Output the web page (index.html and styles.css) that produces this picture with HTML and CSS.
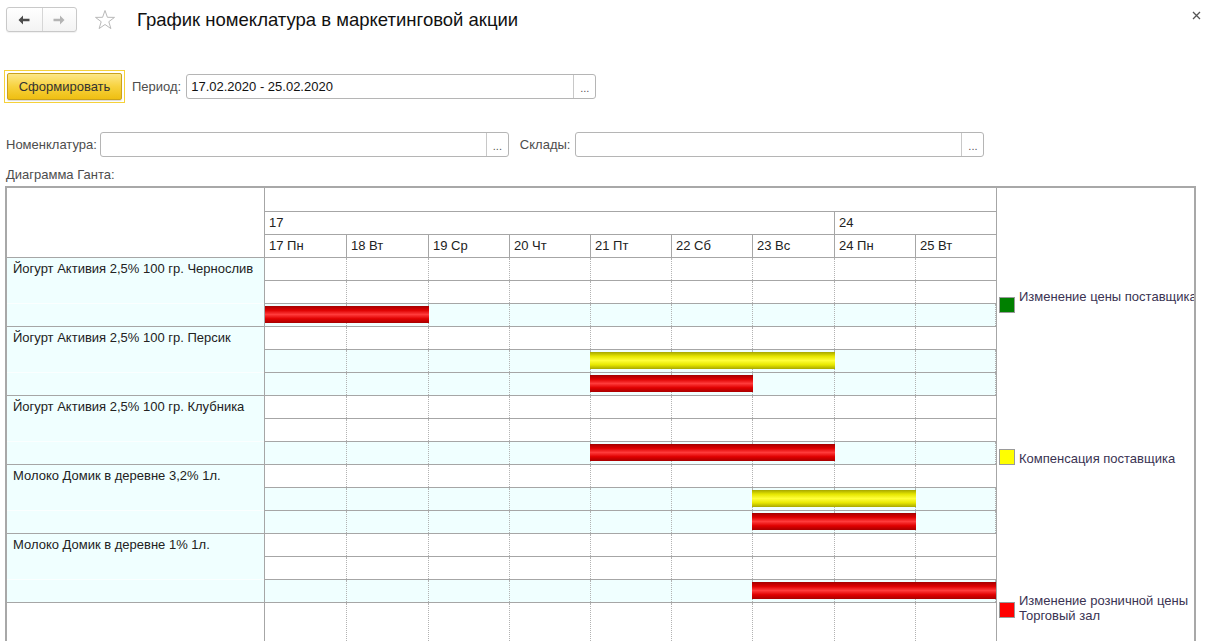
FILE: index.html
```html
<!DOCTYPE html>
<html lang="ru">
<head>
    <meta charset="UTF-8">
    <meta name="viewport" content="width=device-width, initial-scale=1.0">
    <title>График номеклатура в маркетинговой акции</title>
    <link rel="stylesheet" href="styles.css">
</head>
<body>
    <div class="window">
        <div class="titlebar">
            <div class="nav">
                <button class="nav-btn">
                    <svg width="12" height="10" viewBox="-6 -5 12 10"><polygon points="-5.5,0 -1,-4.5 -1,-1.2 5.5,-1.2 5.5,1.2 -1,1.2 -1,4.5" fill="#4a4a4a"/></svg>
                </button>
                <button class="nav-btn disabled">
                    <svg width="12" height="10" viewBox="-6 -5 12 10"><polygon points="5.5,0 1,-4.5 1,-1.2 -5.5,-1.2 -5.5,1.2 1,1.2 1,4.5" fill="#b4b4b4"/></svg>
                </button>
            </div>
            <span class="fav">
                <svg width="22" height="22" viewBox="0 0 22 22"><polygon points="11,1.5 13.4,8.3 20.5,8.4 14.8,12.7 16.9,19.6 11,15.5 5.1,19.6 7.2,12.7 1.5,8.4 8.6,8.3" fill="none" stroke="#b9b9b9" stroke-width="1" stroke-linejoin="round"/></svg>
            </span>
            <h1 class="title">График номеклатура в маркетинговой акции</h1>
            <span class="close">
                <svg width="9" height="9" viewBox="0 0 9 9"><path d="M1 1L8 8M8 1L1 8" stroke="#555" stroke-width="1.3"/></svg>
            </span>
        </div>

        <div class="toolbar">
            <div class="btn-focus"><button class="btn-primary">Сформировать</button></div>
            <span class="field-label period-label">Период:</span>
            <div class="input input-period">
                <span class="input-text">17.02.2020 - 25.02.2020</span>
                <span class="input-choice">...</span>
            </div>
        </div>

        <div class="filters">
            <span class="field-label nomen-label">Номенклатура:</span>
            <div class="input input-filter">
                <span class="input-text"></span>
                <span class="input-choice">...</span>
            </div>
            <span class="field-label stores-label">Склады:</span>
            <div class="input input-filter">
                <span class="input-text"></span>
                <span class="input-choice">...</span>
            </div>
        </div>

        <div class="gantt-caption">Диаграмма Ганта:</div>

        <div class="gantt">
            <div class="gantt-left">
                <div class="left-head"></div>
                <div id="left-rows"></div>
            </div>

            <div class="gantt-chart">
                <div class="scale-top"></div>
                <div class="scale-week">
                    <div class="week week-first">17</div>
                    <div class="week">24</div>
                </div>
                <div class="scale-days" id="scale-days"></div>
                <div id="chart-rows"></div>
                <div class="chart-row chart-filler" id="chart-filler"></div>
            </div>

            <div class="gantt-legend">
                <div class="legend-item legend-supplier">
                    <span class="legend-box green"></span>
                    <span class="legend-text">Изменение цены поставщика</span>
                </div>
                <div class="legend-item legend-compensation">
                    <span class="legend-box yellow"></span>
                    <span class="legend-text">Компенсация поставщика</span>
                </div>
                <div class="legend-item legend-retail">
                    <span class="legend-box red"></span>
                    <span class="legend-text">Изменение розничной цены<br>Торговый зал</span>
                </div>
            </div>
        </div>
    </div>

    <script>
        const days = ['17 Пн', '18 Вт', '19 Ср', '20 Чт', '21 Пт', '22 Сб', '23 Вс', '24 Пн', '25 Вт'];
        // x of each day boundary inside the chart column
        const edges = [-1, 81, 163, 244, 325, 406, 487, 569, 650, 731];

        // lanes: supplier price (green), compensation (yellow), retail price (red)
        const items = [
            { name: 'Йогурт Активия 2,5% 100 гр. Чернослив', lanes: [null, null, [0, 2]] },
            { name: 'Йогурт Активия 2,5% 100 гр. Персик', lanes: [null, [4, 7], [4, 6]] },
            { name: 'Йогурт Активия 2,5% 100 гр. Клубника', lanes: [null, null, [4, 7]] },
            { name: 'Молоко Домик в деревне 3,2% 1л.', lanes: [null, [6, 8], [6, 8]] },
            { name: 'Молоко Домик в деревне 1% 1л.', lanes: [null, null, [6, 9]] }
        ];
        const laneColors = ['green', 'yellow', 'red'];

        const cells = () => days.map(() => '<div class="cell"></div>').join('');

        document.getElementById('scale-days').innerHTML =
            days.map(d => `<div class="day">${d}</div>`).join('');

        document.getElementById('left-rows').innerHTML =
            items.map(item => `<div class="left-group">${item.name}</div>`).join('');

        let rowsHTML = '';
        for (const item of items) {
            item.lanes.forEach((span, i) => {
                if (!span) {
                    rowsHTML += `<div class="chart-row">${cells()}</div>`;
                    return;
                }
                const left = Math.max(0, edges[span[0]]);
                const right = Math.min(731, edges[span[1]] + 1);
                rowsHTML += `
                    <div class="chart-row has-bar">
                        ${cells()}
                        <div class="bar ${laneColors[i]}" style="left:${left}px;width:${right - left}px"></div>
                    </div>`;
            });
        }
        document.getElementById('chart-rows').innerHTML = rowsHTML;
        document.getElementById('chart-filler').innerHTML = cells();
    </script>
</body>
</html>
```

FILE: styles.css
```css
* {
    margin: 0;
    padding: 0;
    box-sizing: border-box;
}

html, body {
    overflow: hidden;
}

body {
    font-family: 'Liberation Sans', Arial, sans-serif;
    font-size: 13px;
    color: #333;
    background: #fff;
}

.window {
    width: 1212px;
    height: 641px;
    overflow: hidden;
}

/* title bar */

.titlebar {
    display: flex;
    align-items: center;
    height: 25px;
    margin-top: 7px;
    padding-left: 6px;
}

.nav {
    display: flex;
    width: 71px;
    height: 25px;
    border: 1px solid #c9c9c9;
    border-radius: 3px;
    background: linear-gradient(#ffffff, #f3f3f3);
    box-shadow: 0 1px 1px rgba(0,0,0,0.06);
}

.nav-btn {
    width: 35px;
    height: 23px;
    border: none;
    background: none;
    display: flex;
    align-items: center;
    justify-content: center;
}

.nav-btn + .nav-btn {
    border-left: 1px solid #d6d6d6;
}

.fav {
    display: flex;
    margin-left: 17px;
}

.title {
    margin-left: 21px;
    font-size: 18.5px;
    font-weight: normal;
    color: #111;
}

.close {
    display: flex;
    align-self: flex-start;
    margin: 4px 11px 0 auto;
}

/* form */

.toolbar {
    display: flex;
    align-items: center;
    height: 33px;
    margin-top: 38px;
    padding-left: 4px;
}

.btn-focus {
    width: 121px;
    height: 33px;
    padding: 2px;
    border: 1px solid #f5d13a;
}

.btn-primary {
    width: 115px;
    height: 27px;
    border: 1px solid #caa21c;
    border-radius: 2px;
    background: linear-gradient(#fde789, #f7d23e 50%, #efbf12);
    box-shadow: 0 1px 1px rgba(0,0,0,0.15);
    font-family: inherit;
    font-size: 13px;
    color: #333;
}

.field-label {
    color: #4d4d4d;
    margin-right: 5px;
}

.period-label {
    margin-left: 7px;
}

.nomen-label {
    margin-right: 3px;
}

.input {
    display: flex;
    height: 25px;
    border: 1px solid #b5b5b5;
    border-radius: 3px;
    background: #fff;
}

.input-period {
    width: 410px;
}

.input-filter {
    width: 409px;
}

.input-text {
    flex: 1;
    padding-left: 4px;
    line-height: 23px;
    color: #111;
}

.input-choice {
    width: 22px;
    border-left: 1px solid #c8c8c8;
    text-align: center;
    font-size: 11px;
    line-height: 26px;
    color: #555;
}

.filters {
    display: flex;
    align-items: center;
    height: 25px;
    margin-top: 29px;
    padding-left: 6px;
}

.stores-label {
    margin-left: 11px;
}

.gantt-caption {
    margin-top: 10px;
    padding-left: 6px;
    line-height: 15px;
    color: #4d4d4d;
}

/* gantt chart */

.gantt {
    display: flex;
    width: 1191px;
    height: 520px;
    margin: 4px 0 0 5px;
    border: 2px solid #a8a8a8;
    color: #222;
}

.gantt-left {
    width: 258px;
    border-right: 1px solid #a6a6a6;
    background: #fff;
}

.left-head {
    height: 70px;
    border-bottom: 1px solid #a6a6a6;
}

.left-group {
    height: 69px;
    padding: 3px 0 0 6px;
    line-height: 15px;
    border-bottom: 1px solid #a6a6a6;
    background: linear-gradient(#f0ffff 45px, #fbffff 45px, #fbffff 46px, #f0ffff 46px);
}

.gantt-chart {
    width: 731px;
    --cols: 82px 82px 81px 81px 81px 81px 82px 81px 80px;
}

.scale-top {
    height: 24px;
    border-bottom: 1px solid #a6a6a6;
}

.scale-week,
.scale-days,
.chart-row {
    display: grid;
    grid-template-columns: var(--cols);
    height: 23px;
    border-bottom: 1px solid #a6a6a6;
}

.week {
    grid-column: 8 / 10;
    padding-left: 4px;
    line-height: 22px;
}

.week-first {
    grid-column: 1 / 8;
    border-right: 1px solid #a6a6a6;
}

.day {
    padding-left: 4px;
    line-height: 22px;
    border-right: 1px solid #a6a6a6;
}

.day:last-child {
    border-right: none;
}

.chart-row {
    position: relative;
    background: #fff;
}

.chart-row.has-bar {
    background: #f0ffff;
}

.cell {
    border-right: 1px dotted #b2b2b2;
}

.cell:last-child {
    border-right: none;
}

.chart-filler {
    height: 60px;
    border-bottom: none;
}

.bar {
    position: absolute;
    top: 2px;
    height: 17px;
}

.bar.red {
    background: linear-gradient(#a30000, #dd0000 25%, #ff3b3b 50%, #e00000 75%, #a80000);
}

.bar.yellow {
    background: linear-gradient(#a6a600, #e6e600 25%, #ffff3a 50%, #e8e800 75%, #a8a800);
}

/* legend */

.gantt-legend {
    flex: 1;
    display: flex;
    flex-direction: column;
    border-left: 1px solid #a6a6a6;
    overflow: hidden;
}

.legend-item {
    display: flex;
    align-items: flex-start;
    padding-left: 2px;
    white-space: nowrap;
}

.legend-box {
    flex: none;
    width: 16px;
    height: 16px;
    border: 1px solid #9a9a9a;
    margin-right: 4px;
}

.legend-box.green {
    background: #008000;
}

.legend-box.yellow {
    background: #ffff00;
}

.legend-box.red {
    background: #ff0000;
}

.legend-text {
    line-height: 15px;
    color: #3a3352;
}

.legend-supplier {
    margin-top: 101px;
}

.legend-supplier .legend-box {
    margin-top: 8px;
}

.legend-compensation {
    margin-top: 137px;
}

.legend-compensation .legend-box {
    margin-top: -1px;
}

.legend-compensation .legend-text {
    margin-top: 1px;
}

.legend-retail {
    margin-top: 127px;
}

.legend-retail .legend-box {
    margin-top: 9px;
}
```
